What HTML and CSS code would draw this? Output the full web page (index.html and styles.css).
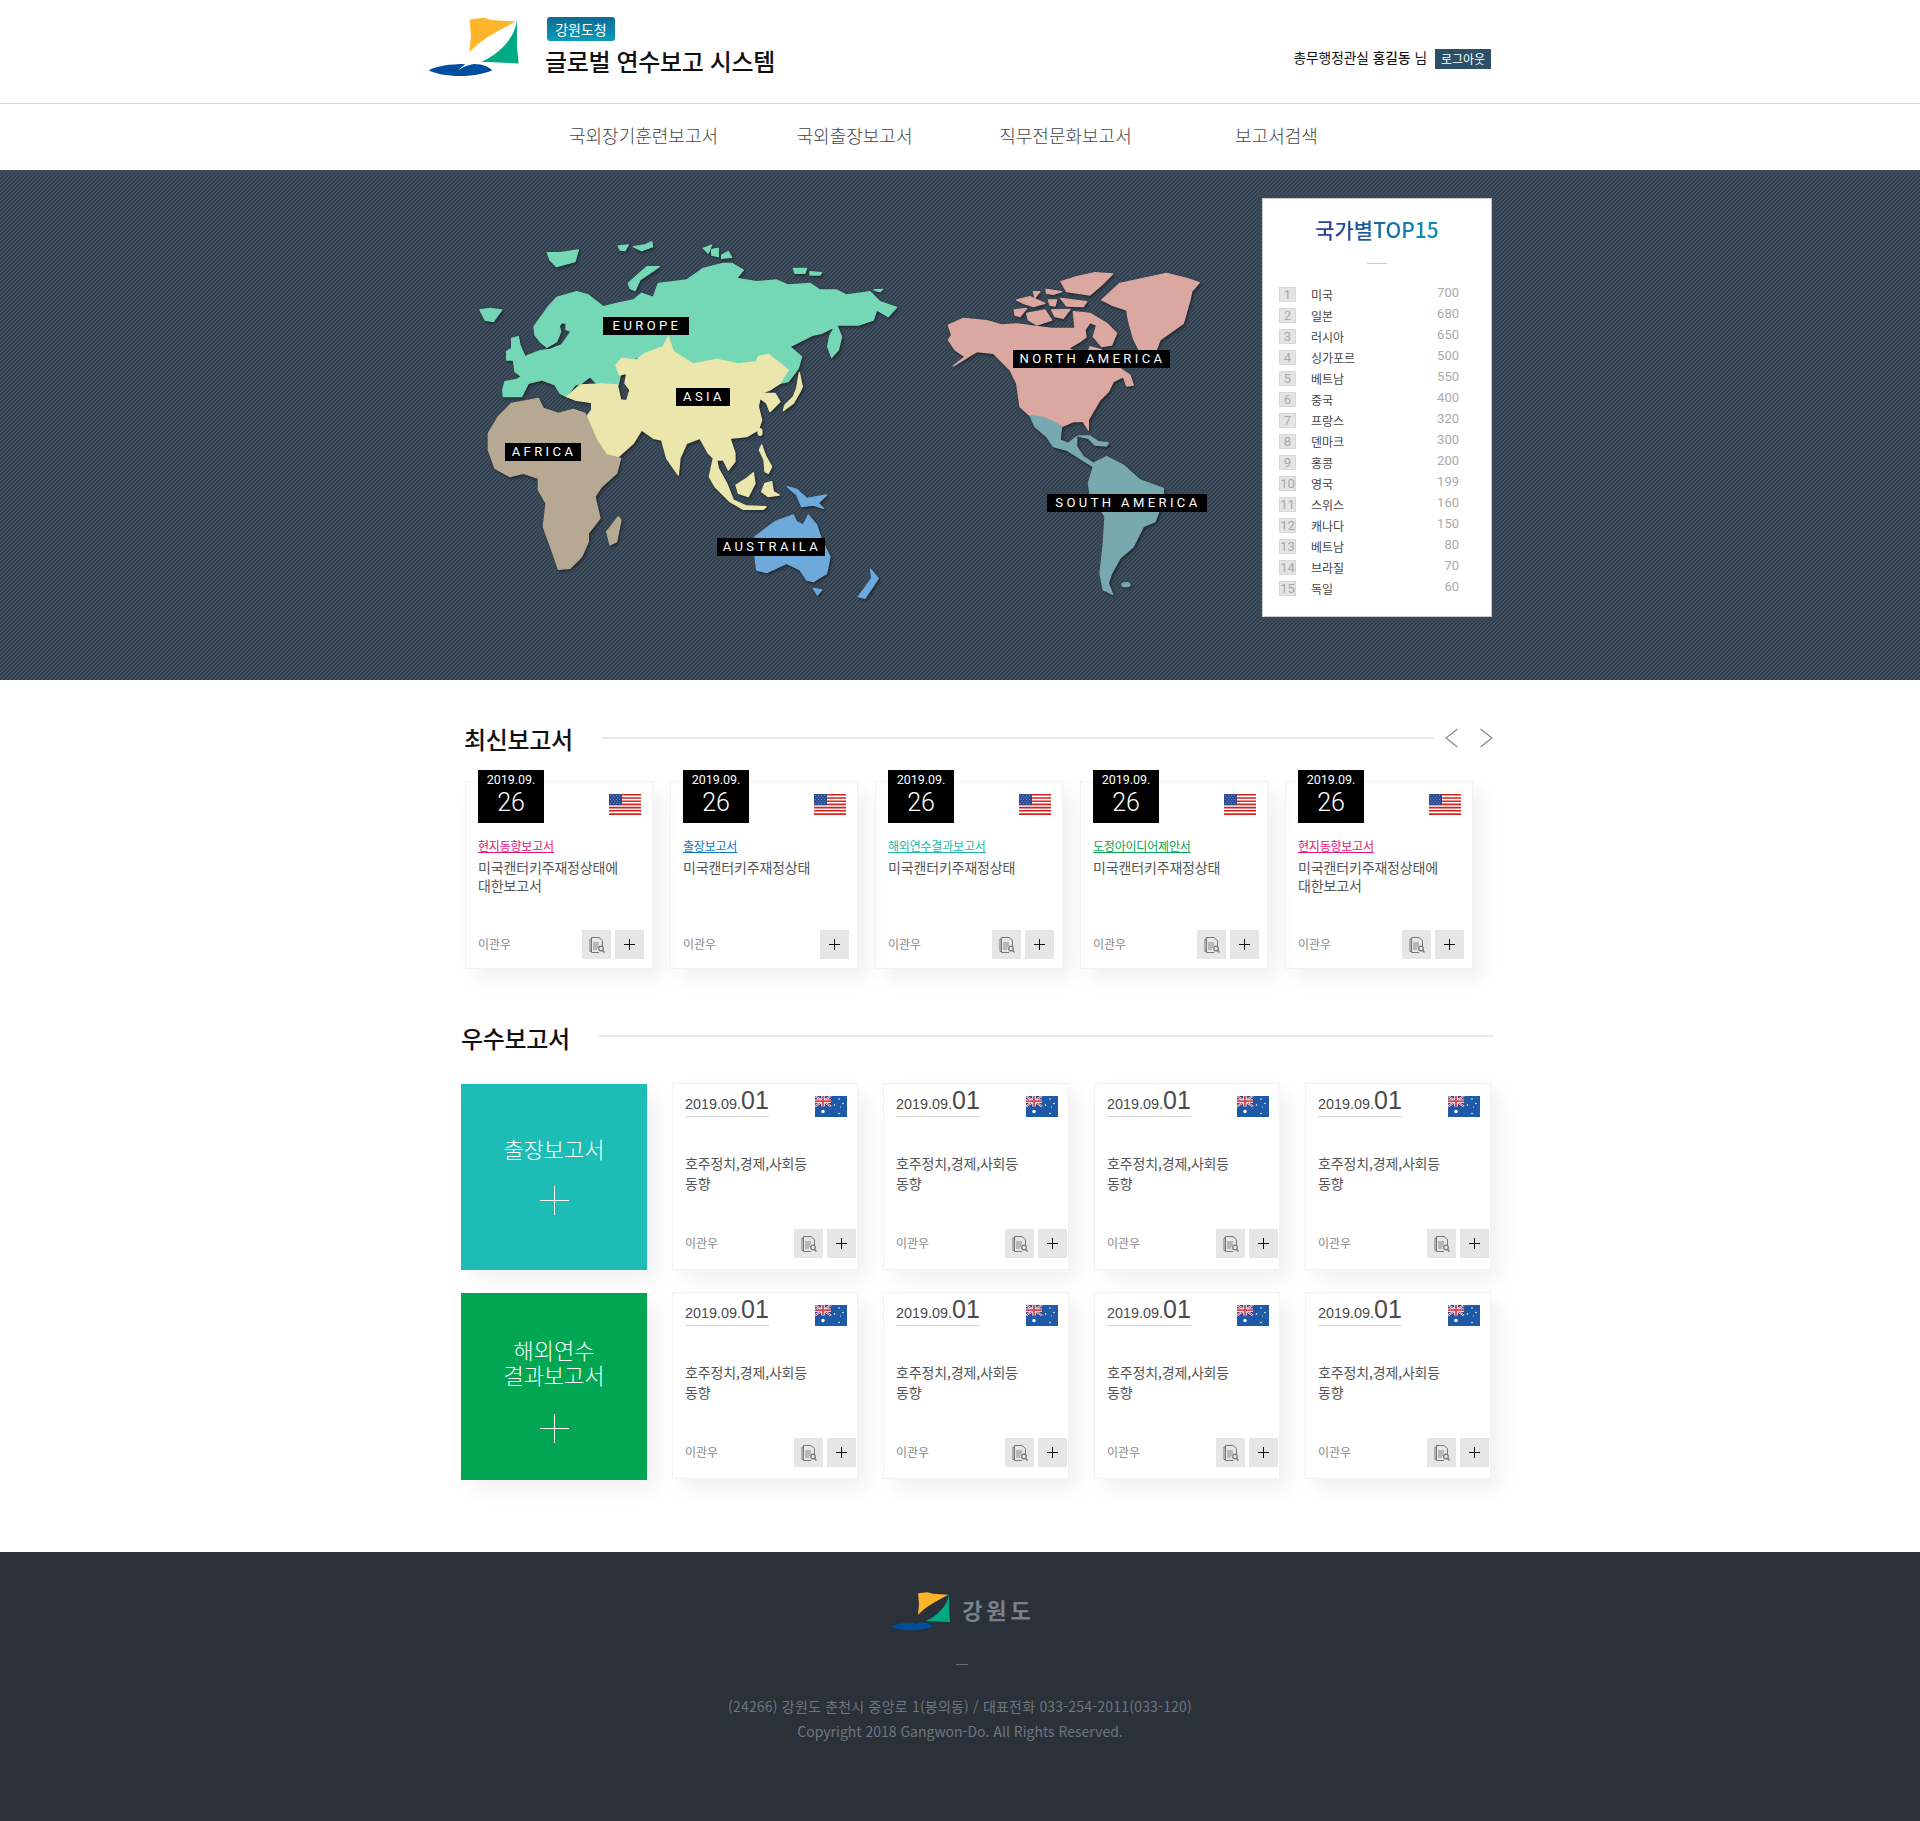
FILE: index.html
```html
<!DOCTYPE html>
<html lang="ko">
<head>
    <meta charset="UTF-8">
    <meta name="viewport" content="width=device-width, initial-scale=1.0">
    <title>글로벌 연수보고 시스템</title>
    <link rel="stylesheet" href="styles.css">
</head>
<body>

<!-- shared icons -->
<svg class="sprite" width="0" height="0">
    <defs>
        <symbol id="logo" viewBox="25 20 272 180">
            <path fill="#fdb62a" d="M148 30L190 25L215 32L285 36C240 60 180 90 147 128L152 80Z"/>
            <path fill="#00ab84" d="M288 28C285 80 240 130 183 155L293 160L288 110Z"/>
            <path fill="#004f9e" d="M27 180C50 168 90 162 135 162L113 182C125 172 140 166 160 162C190 162 205 172 215 180C190 192 150 197 120 197C80 197 45 190 27 180Z"/>
        </symbol>
        <symbol id="flag-us" viewBox="0 0 32 21">
            <rect width="32" height="21" fill="#fff"/>
            <path fill="#d8231f" d="M0 0h32v1.6H0zM0 3.2h32v1.6H0zM0 6.4h32V8H0zM0 9.6h32v1.6H0zM0 12.8h32v1.6H0zM0 16h32v1.6H0zM0 19.2h32V21H0z"/>
            <rect width="13" height="11.2" fill="#2f4d92"/>
            <path fill="#6f86ba" d="M1 1h1v1H1zM4 1h1v1H4zM7 1h1v1H7zM10 1h1v1h-1zM2.500 3h1v1h-1zM5.500 3h1v1h-1zM8.500 3h1v1h-1zM1 5h1v1H1zM4 5h1v1H4zM7 5h1v1H7zM10 5h1v1h-1zM2.500 7h1v1h-1zM5.500 7h1v1h-1zM8.500 7h1v1h-1zM1 9h1v1H1zM4 9h1v1H4zM7 9h1v1H7zM10 9h1v1h-1z"/>
        </symbol>
        <symbol id="flag-au" viewBox="0 0 32 21">
            <rect width="32" height="21" fill="#1f5aa6"/>
            <rect width="16" height="10.500" fill="#27479a"/>
            <path stroke="#fff" stroke-width="2" d="M0 0L16 10.500M16 0L0 10.500"/>
            <path stroke="#d9434e" stroke-width="1" d="M0 0L16 10.500M16 0L0 10.500"/>
            <path stroke="#fff" stroke-width="3.400" d="M8 0V10.500M0 5.250H16"/>
            <path stroke="#d9434e" stroke-width="1.800" d="M8 0V10.500M0 5.250H16"/>
            <g fill="#fff">
                <circle cx="8" cy="15.500" r="1.700"/>
                <circle cx="24" cy="3" r=".8"/>
                <circle cx="19.500" cy="9" r=".8"/>
                <circle cx="28" cy="7.500" r=".8"/>
                <circle cx="24" cy="17.500" r=".8"/>
                <circle cx="25.500" cy="11" r=".5"/>
            </g>
        </symbol>
        <symbol id="ico-doc" viewBox="0 0 18 18">
            <path fill="none" stroke="#777" stroke-width="1" d="M3.500 3V1.500H11L14.500 4.500V10M3.500 3H2V15.500H3.500M3.500 2.500V16.500H11"/>
            <path stroke="#888" stroke-width="1" d="M5 7h6M5 9h6M5 11h5M5 13h4"/>
            <circle cx="13" cy="12.500" r="2.300" fill="none" stroke="#777" stroke-width="1.200"/>
            <path stroke="#777" stroke-width="1.400" d="M14.500 14.500L16.500 16.500"/>
        </symbol>
        <symbol id="ico-plus" viewBox="0 0 11 11">
            <path stroke="#111" stroke-width="1" d="M5.500 0V11M0 5.500H11"/>
        </symbol>
        <symbol id="ico-plus-big" viewBox="0 0 29 29">
            <path stroke="#fff" stroke-width="1" d="M14.500 0V29M0 14.500H29"/>
        </symbol>
    </defs>
</svg>

<header class="top">
    <div class="top-inner">
        <svg class="top-logo"><use href="#logo"/></svg>
        <div class="brand">
            <span class="brand-badge">강원도청</span>
            <h1 class="brand-title">글로벌 연수보고 시스템</h1>
        </div>
        <div class="user-box">
            <span class="user-name">총무행정관실 <b>홍길동</b> 님</span>
            <a class="logout">로그아웃</a>
        </div>
    </div>
</header>

<nav class="gnb">
    <a>국외장기훈련보고서</a>
    <a>국외출장보고서</a>
    <a>직무전문화보고서</a>
    <a>보고서검색</a>
</nav>

<section class="hero">
    <div class="hero-inner">
        <div class="map">
            <svg class="map-svg" viewBox="0 0 780 400">
                <g class="map-shapes" transform="translate(0 0) scale(.33333)">
                    <g class="land land-green">
                        <path d="M128 510L135 485L170 478L185 470L165 455L160 420L140 420L140 395L155 385L155 355L175 350L180 375L195 410L240 392L270 388L305 375L333 335L318 328L318 310L305 308L298 318L302 335L290 365L260 382L240 365L225 345L222 320L265 260L290 232L350 215L385 225L430 260L470 250L520 240L545 220L580 232L595 190L640 185L680 180L730 145L790 130L815 130L850 150L830 175L890 185L950 180L985 195L1050 190L1080 210L1130 210L1160 225L1230 215L1260 245L1310 262L1285 290L1250 270L1240 300L1195 315L1150 315L1130 315L1145 350L1135 390L1115 412L1103 380L1110 345L1125 320L1085 340L1060 345L990 380L1025 410L1015 445L985 485L960 490L940 460L900 430L835 440L770 425L700 440L650 420L625 370L555 410L490 420L475 495L430 490L420 500L390 470L365 490L345 495L320 530L300 520L285 495L245 480L205 490L185 530L130 530Z"/>
                        <path d="M262 98L300 98L355 90L345 125L290 140L270 120Z"/>
                        <path d="M60 270L90 265L125 270L100 305L75 300Z"/>
                        <path d="M505 190L560 140L598 140L540 180L525 212L510 205Z"/>
                        <path d="M475 78L505 75L495 92L480 90Z"/>
                        <path d="M520 80L555 75L575 65L578 80L545 92Z"/>
                        <path d="M730 85L755 75L745 100Z"/>
                        <path d="M755 88L775 85L775 110L755 105Z"/>
                        <path d="M785 105L805 95L815 112L785 115Z"/>
                        <path d="M1000 145L1040 145L1035 160L1005 160Z"/>
                        <path d="M1050 155L1085 158L1080 165L1050 165Z"/>
                        <path d="M1242 210L1268 208L1260 215Z"/>
                    </g>
                    <g class="land land-yellow">
                        <path d="M320 530L360 495L425 492L472 495L482 540L500 542L510 510L495 490L500 460L478 465L468 435L485 415L530 420L555 400L610 380L625 350L640 395L700 432L770 418L835 432L890 425L895 410L925 403L960 430L985 450L960 490L930 510L895 525L920 520L945 520L960 545L930 575L920 550L900 535L895 560L905 600L895 630L860 650L810 655L825 700L825 725L805 750L790 720L770 720L775 745L800 790L820 840L860 858L918 860L910 868L850 868L810 845L765 800L748 770L760 715L745 700L720 655L680 670L660 715L655 765L620 715L605 660L580 655L545 630L520 670L475 710L440 705L410 660L380 590L395 570L395 548L345 540Z"/>
                        <path d="M1018 458L1027 500L1020 515L1000 550L970 572L975 555L1000 530L1010 505Z"/>
                        <ellipse cx="900" cy="636" rx="6" ry="10"/>
                        <path d="M905 675L918 710L935 740L925 760L915 755L912 720L898 690Z"/>
                        <path d="M880 758L885 790L865 830L835 820L828 795L860 775Z"/>
                        <path d="M915 790L935 785L940 815L958 825L925 830L905 815Z"/>
                    </g>
                    <g class="land land-tan">
                        <path d="M85 640L115 590L155 550L235 535L250 565L295 580L340 568L375 580L410 660L440 705L482 715L470 760L425 800L405 830L420 895L385 940L385 965L365 1010L330 1045L295 1048L275 990L250 920L258 850L235 810L235 775L190 760L150 770L105 745L85 690Z"/>
                        <path d="M475 890L483 900L470 965L450 975L440 935Z"/>
                    </g>
                    <g class="land land-blue">
                        <path d="M885 950L945 905L1000 885L1010 905L1030 915L1045 885L1070 915L1085 960L1110 1010L1100 1060L1060 1085L1040 1080L1020 1050L980 1030L920 1058L890 1050L885 1010Z"/>
                        <path d="M1232 1048L1255 1075L1215 1135L1195 1130L1235 1075Z"/>
                        <path d="M1060 1105L1085 1110L1072 1125Z"/>
                        <path d="M982 800L1010 808L1040 835L1100 825L1075 850L1090 865L1060 855L1025 860L1010 825Z"/>
                    </g>
                </g>
                <g class="map-shapes" transform="translate(460 30) scale(.33333)">
                    <g class="land land-pink">
                        <path d="M85 225L130 205L200 212L245 225L290 222L395 235L465 235L460 185L510 190L560 220L590 250L575 285L545 290L520 260L530 225L510 218L495 240L498 262L480 275L445 295L500 320L510 290L545 300L555 325L630 375L640 405L620 408L610 380L580 395L565 425L540 450L505 510L505 540L490 515L460 515L425 530L400 515L370 502L330 497L300 470L290 400L270 360L220 310L170 305L100 348L135 320L105 300L85 270L95 255Z"/>
                        <path d="M545 150L600 100L670 85L740 70L800 85L838 98L815 125L810 150L790 220L720 270L705 310L660 305L640 265L625 210L620 180L575 165Z"/>
                        <path d="M423 95L470 80L525 68L578 72L545 105L510 135L440 125Z"/>
                        <path d="M340 125L360 125L345 143Z"/>
                        <path d="M378 118L425 125L400 133L380 130Z"/>
                        <path d="M290 150L330 140L375 160L340 170L310 160Z"/>
                        <path d="M385 150L410 150L405 168L390 165Z"/>
                        <path d="M422 145L500 155L490 170L440 168Z"/>
                        <path d="M283 180L320 175L300 200L285 195Z"/>
                        <path d="M320 190L375 180L395 210L350 225L325 210Z"/>
                        <path d="M395 180L450 178L430 205L405 200Z"/>
                    </g>
                    <g class="land land-steel">
                        <path d="M330 497L370 502L400 515L425 530L420 570L445 580L470 560L470 590L490 620L520 640L560 620L610 645L660 690L730 715L730 750L705 815L670 830L640 890L600 925L575 970L565 1000L578 1033L550 1020L540 970L550 880L555 800L510 730L505 700L520 650L495 635L440 600L400 590L380 560L345 530Z"/>
                        <path d="M475 558L510 558L535 575L565 578L560 588L525 585L505 565Z"/>
                        <ellipse cx="618" cy="1004" rx="12" ry="6"/>
                    </g>
                </g>
            </svg>
            <span class="map-label lb-europe">EUROPE</span>
            <span class="map-label lb-asia">ASIA</span>
            <span class="map-label lb-africa">AFRICA</span>
            <span class="map-label lb-australia">AUSTRAILA</span>
            <span class="map-label lb-north">NORTH AMERICA</span>
            <span class="map-label lb-south">SOUTH AMERICA</span>
        </div>

        <aside class="rank">
            <h2 class="rank-title">국가별TOP15</h2>
            <ol class="rank-list">
                <li><span class="rank-no">1</span><span class="rank-name">미국</span><span class="rank-val">700</span></li>
                <li><span class="rank-no">2</span><span class="rank-name">일본</span><span class="rank-val">680</span></li>
                <li><span class="rank-no">3</span><span class="rank-name">러시아</span><span class="rank-val">650</span></li>
                <li><span class="rank-no">4</span><span class="rank-name">싱가포르</span><span class="rank-val">500</span></li>
                <li><span class="rank-no">5</span><span class="rank-name">베트남</span><span class="rank-val">550</span></li>
                <li><span class="rank-no">6</span><span class="rank-name">중국</span><span class="rank-val">400</span></li>
                <li><span class="rank-no">7</span><span class="rank-name">프랑스</span><span class="rank-val">320</span></li>
                <li><span class="rank-no">8</span><span class="rank-name">덴마크</span><span class="rank-val">300</span></li>
                <li><span class="rank-no">9</span><span class="rank-name">홍콩</span><span class="rank-val">200</span></li>
                <li><span class="rank-no">10</span><span class="rank-name">영국</span><span class="rank-val">199</span></li>
                <li><span class="rank-no">11</span><span class="rank-name">스위스</span><span class="rank-val">160</span></li>
                <li><span class="rank-no">12</span><span class="rank-name">캐나다</span><span class="rank-val">150</span></li>
                <li><span class="rank-no">13</span><span class="rank-name">베트남</span><span class="rank-val">80</span></li>
                <li><span class="rank-no">14</span><span class="rank-name">브라질</span><span class="rank-val">70</span></li>
                <li><span class="rank-no">15</span><span class="rank-name">독일</span><span class="rank-val">60</span></li>
            </ol>
        </aside>
    </div>
</section>

<main class="content">
    <section class="latest">
        <div class="sec-head">
            <h2 class="sec-title">최신보고서</h2>
            <span class="sec-line"></span>
            <svg class="arrows" width="48" height="20" viewBox="0 0 48 20">
                <path fill="none" stroke="#888" stroke-width="1.300" d="M12.500 1L1 10L12.500 19M35.500 1L47 10L35.500 19"/>
            </svg>
        </div>
        <div class="latest-row">
            <article class="card">
                <div class="card-top">
                    <div class="date-box"><span class="date-ym">2019.09.</span><span class="date-d">26</span></div>
                    <svg class="flag"><use href="#flag-us"/></svg>
                </div>
                <a class="cat cat-pink">현지동향보고서</a>
                <p class="card-text">미국캔터키주재정상태에<br>대한보고서</p>
                <div class="card-foot">
                    <span class="author">이관우</span>
                    <span class="btn"><svg class="ico-doc"><use href="#ico-doc"/></svg></span>
                    <span class="btn"><svg class="ico-plus"><use href="#ico-plus"/></svg></span>
                </div>
            </article>
            <article class="card">
                <div class="card-top">
                    <div class="date-box"><span class="date-ym">2019.09.</span><span class="date-d">26</span></div>
                    <svg class="flag"><use href="#flag-us"/></svg>
                </div>
                <a class="cat cat-blue">출장보고서</a>
                <p class="card-text">미국캔터키주재정상태</p>
                <div class="card-foot">
                    <span class="author">이관우</span>
                    <span class="btn"><svg class="ico-plus"><use href="#ico-plus"/></svg></span>
                </div>
            </article>
            <article class="card">
                <div class="card-top">
                    <div class="date-box"><span class="date-ym">2019.09.</span><span class="date-d">26</span></div>
                    <svg class="flag"><use href="#flag-us"/></svg>
                </div>
                <a class="cat cat-teal">해외연수결과보고서</a>
                <p class="card-text">미국캔터키주재정상태</p>
                <div class="card-foot">
                    <span class="author">이관우</span>
                    <span class="btn"><svg class="ico-doc"><use href="#ico-doc"/></svg></span>
                    <span class="btn"><svg class="ico-plus"><use href="#ico-plus"/></svg></span>
                </div>
            </article>
            <article class="card">
                <div class="card-top">
                    <div class="date-box"><span class="date-ym">2019.09.</span><span class="date-d">26</span></div>
                    <svg class="flag"><use href="#flag-us"/></svg>
                </div>
                <a class="cat cat-green">도정아이디어제안서</a>
                <p class="card-text">미국캔터키주재정상태</p>
                <div class="card-foot">
                    <span class="author">이관우</span>
                    <span class="btn"><svg class="ico-doc"><use href="#ico-doc"/></svg></span>
                    <span class="btn"><svg class="ico-plus"><use href="#ico-plus"/></svg></span>
                </div>
            </article>
            <article class="card">
                <div class="card-top">
                    <div class="date-box"><span class="date-ym">2019.09.</span><span class="date-d">26</span></div>
                    <svg class="flag"><use href="#flag-us"/></svg>
                </div>
                <a class="cat cat-pink">현지동향보고서</a>
                <p class="card-text">미국캔터키주재정상태에<br>대한보고서</p>
                <div class="card-foot">
                    <span class="author">이관우</span>
                    <span class="btn"><svg class="ico-doc"><use href="#ico-doc"/></svg></span>
                    <span class="btn"><svg class="ico-plus"><use href="#ico-plus"/></svg></span>
                </div>
            </article>
        </div>
    </section>

    <section class="best">
        <div class="sec-head sec-head-best">
            <h2 class="sec-title">우수보고서</h2>
            <span class="sec-line"></span>
        </div>
        <div class="best-grid">
            <a class="tile tile-teal">
                <span class="tile-text">출장보고서</span>
                <svg class="ico-plus-big"><use href="#ico-plus-big"/></svg>
            </a>
            <article class="mini">
                <div class="mini-top"><span class="mini-date">2019.09.<b>01</b></span><svg class="flag"><use href="#flag-au"/></svg></div>
                <p class="mini-text">호주정치,경제,사회등<br>동향</p>
                <div class="mini-foot"><span class="author">이관우</span><span class="btn"><svg class="ico-doc"><use href="#ico-doc"/></svg></span><span class="btn"><svg class="ico-plus"><use href="#ico-plus"/></svg></span></div>
            </article>
            <article class="mini">
                <div class="mini-top"><span class="mini-date">2019.09.<b>01</b></span><svg class="flag"><use href="#flag-au"/></svg></div>
                <p class="mini-text">호주정치,경제,사회등<br>동향</p>
                <div class="mini-foot"><span class="author">이관우</span><span class="btn"><svg class="ico-doc"><use href="#ico-doc"/></svg></span><span class="btn"><svg class="ico-plus"><use href="#ico-plus"/></svg></span></div>
            </article>
            <article class="mini">
                <div class="mini-top"><span class="mini-date">2019.09.<b>01</b></span><svg class="flag"><use href="#flag-au"/></svg></div>
                <p class="mini-text">호주정치,경제,사회등<br>동향</p>
                <div class="mini-foot"><span class="author">이관우</span><span class="btn"><svg class="ico-doc"><use href="#ico-doc"/></svg></span><span class="btn"><svg class="ico-plus"><use href="#ico-plus"/></svg></span></div>
            </article>
            <article class="mini">
                <div class="mini-top"><span class="mini-date">2019.09.<b>01</b></span><svg class="flag"><use href="#flag-au"/></svg></div>
                <p class="mini-text">호주정치,경제,사회등<br>동향</p>
                <div class="mini-foot"><span class="author">이관우</span><span class="btn"><svg class="ico-doc"><use href="#ico-doc"/></svg></span><span class="btn"><svg class="ico-plus"><use href="#ico-plus"/></svg></span></div>
            </article>

            <a class="tile tile-green">
                <span class="tile-text">해외연수<br>결과보고서</span>
                <svg class="ico-plus-big"><use href="#ico-plus-big"/></svg>
            </a>
            <article class="mini">
                <div class="mini-top"><span class="mini-date">2019.09.<b>01</b></span><svg class="flag"><use href="#flag-au"/></svg></div>
                <p class="mini-text">호주정치,경제,사회등<br>동향</p>
                <div class="mini-foot"><span class="author">이관우</span><span class="btn"><svg class="ico-doc"><use href="#ico-doc"/></svg></span><span class="btn"><svg class="ico-plus"><use href="#ico-plus"/></svg></span></div>
            </article>
            <article class="mini">
                <div class="mini-top"><span class="mini-date">2019.09.<b>01</b></span><svg class="flag"><use href="#flag-au"/></svg></div>
                <p class="mini-text">호주정치,경제,사회등<br>동향</p>
                <div class="mini-foot"><span class="author">이관우</span><span class="btn"><svg class="ico-doc"><use href="#ico-doc"/></svg></span><span class="btn"><svg class="ico-plus"><use href="#ico-plus"/></svg></span></div>
            </article>
            <article class="mini">
                <div class="mini-top"><span class="mini-date">2019.09.<b>01</b></span><svg class="flag"><use href="#flag-au"/></svg></div>
                <p class="mini-text">호주정치,경제,사회등<br>동향</p>
                <div class="mini-foot"><span class="author">이관우</span><span class="btn"><svg class="ico-doc"><use href="#ico-doc"/></svg></span><span class="btn"><svg class="ico-plus"><use href="#ico-plus"/></svg></span></div>
            </article>
            <article class="mini">
                <div class="mini-top"><span class="mini-date">2019.09.<b>01</b></span><svg class="flag"><use href="#flag-au"/></svg></div>
                <p class="mini-text">호주정치,경제,사회등<br>동향</p>
                <div class="mini-foot"><span class="author">이관우</span><span class="btn"><svg class="ico-doc"><use href="#ico-doc"/></svg></span><span class="btn"><svg class="ico-plus"><use href="#ico-plus"/></svg></span></div>
            </article>
        </div>
    </section>
</main>

<footer class="foot">
    <div class="foot-logo">
        <svg class="foot-mark"><use href="#logo"/></svg>
        <span class="foot-name">강원도</span>
    </div>
    <span class="foot-dash"></span>
    <p class="foot-addr">(24266) 강원도 춘천시 중앙로 1(봉의동) / 대표전화 033-254-2011(033-120)</p>
    <p class="foot-copy">Copyright 2018 Gangwon-Do. All Rights Reserved.</p>
</footer>

</body>
</html>
```

FILE: styles.css
```css
* {
    box-sizing: border-box;
}
body {
    margin: 0;
    background: #fff;
    color: #222;
    font-family: "Noto Sans CJK KR", "Noto Sans", sans-serif;
}
h1, h2, p, ol {
    margin: 0;
    padding: 0;
}
.sprite {
    display: block;
}

/* header */
.top {
    height: 104px;
    border-bottom: 1px solid #d9d9d9;
}
.top-inner {
    width: 1064px;
    height: 103px;
    margin: 0 auto;
    display: flex;
}
.top-logo {
    width: 92px;
    height: 61px;
    margin-top: 16px;
}
.brand {
    margin-left: 25px;
    padding-top: 17px;
}
.brand-badge {
    display: block;
    width: 68px;
    height: 24px;
    margin-left: 2px;
    border-radius: 3px;
    background: linear-gradient(#0c6b92, #0a9cbc);
    color: #fff;
    font-size: 14px;
    line-height: 24px;
    text-align: center;
}
.brand-title {
    margin-top: 3px;
    color: #111;
    font-size: 24px;
    font-weight: 500;
    line-height: 34px;
    letter-spacing: -.35px;
}
.user-box {
    margin-left: auto;
    margin-right: 1px;
    padding-top: 45px;
    display: flex;
    height: 71px;
    align-items: center;
    gap: 8px;
}
.user-name {
    margin-bottom: 2px;
    color: #111;
    font-size: 13.7px;
}
.user-name b {
    font-weight: 500;
}
.logout {
    width: 56px;
    height: 20px;
    margin-top: 2px;
    background: #2b5068;
    color: #fff;
    font-size: 12px;
    line-height: 20px;
    text-align: center;
}

/* nav */
.gnb {
    width: 844px;
    height: 66px;
    margin: 0 auto;
    padding-bottom: 4px;
    display: grid;
    grid-template-columns: repeat(4, 1fr);
    align-items: center;
    text-align: center;
}
.gnb a {
    color: #444;
    font-size: 18px;
    font-weight: 300;
}

/* hero */
.hero {
    height: 510px;
    background-color: #404f5f;
    background-image: linear-gradient(135deg, #33414f 25%, transparent 25%, transparent 50%, #33414f 50%, #33414f 75%, transparent 75%);
    background-size: 4px 4px;
}
.hero-inner {
    width: 1031px;
    height: 510px;
    margin-left: 461px;
    position: relative;
    display: flex;
    justify-content: flex-end;
}
.map {
    position: absolute;
    left: -1px;
    top: 50px;
    width: 780px;
    height: 400px;
}
.map-svg {
    display: block;
    width: 780px;
    height: 400px;
}
.map-shapes {
    filter: drop-shadow(4px 5px 4px rgba(0, 0, 0, .45));
}
.land {
    stroke-width: 4;
    stroke-linejoin: round;
}
.land-green { fill: #74d7b6; stroke: #74d7b6; }
.land-yellow { fill: #ebe6ac; stroke: #ebe6ac; }
.land-tan { fill: #b6a892; stroke: #b6a892; }
.land-blue { fill: #6ea9dc; stroke: #6ea9dc; }
.land-pink { fill: #daa8a0; stroke: #daa8a0; }
.land-steel { fill: #78a8b0; stroke: #78a8b0; }
.map-label {
    position: absolute;
    height: 18px;
    padding-left: 2px;
    background: #000;
    color: #fff;
    font-family: "Roboto", sans-serif;
    font-size: 13px;
    line-height: 17px;
    letter-spacing: 3.4px;
    text-align: center;
}
.lb-europe { left: 143px; top: 97px; width: 86px; }
.lb-asia { left: 216px; top: 168px; width: 54px; }
.lb-africa { left: 45px; top: 223px; width: 76px; }
.lb-australia { left: 257px; top: 318px; width: 108px; }
.lb-north { left: 553px; top: 130px; width: 157px; }
.lb-south { left: 587px; top: 274px; width: 160px; }

/* rank panel */
.rank {
    width: 230px;
    height: 419px;
    margin-top: 28px;
    padding: 16px 32px 0 16px;
    border: 1px solid #ccc;
    background: #fff;
}
.rank-title {
    width: 228px;
    margin-left: -16px;
    background: linear-gradient(90deg, #2b3f8f 30%, #0a8cb8 70%);
    -webkit-background-clip: text;
    background-clip: text;
    color: transparent;
    font-size: 21px;
    font-weight: 500;
    line-height: 28px;
    text-align: center;
}
.rank-title::after {
    content: "";
    display: block;
    width: 20px;
    height: 1px;
    margin: 20px auto 0;
    background: #ccc;
}
.rank-list {
    margin-top: 23px;
    list-style: none;
}
.rank-list li {
    height: 21px;
    display: flex;
}
.rank-no {
    width: 17px;
    height: 15px;
    background: #e4e4e4;
    border: 1px solid #d8d8d8;
    color: #a8a8a8;
    font-family: "Roboto", sans-serif;
    font-size: 13px;
    line-height: 13px;
    text-align: center;
}
.rank-name {
    margin-left: 15px;
    color: #444;
    font-size: 12px;
    line-height: 16px;
}
.rank-val {
    height: 13px;
    margin-left: auto;
    margin-top: -1px;
    color: #aaa;
    font-family: "Roboto", sans-serif;
    font-size: 13px;
    line-height: 13px;
}

/* sections */
.content {
    width: 1032px;
    margin-left: 461px;
    padding-top: 42px;
}
.sec-head {
    height: 34px;
    padding-left: 3px;
    display: flex;
    align-items: center;
}
.sec-title {
    color: #111;
    font-size: 24px;
    font-weight: 500;
    line-height: 34px;
    letter-spacing: -.3px;
}
.sec-line {
    flex: 1;
    height: 2px;
    margin: -2px 0 0 29px;
    background: #e8e8e8;
}
.arrows {
    margin: -2px 0 0 11px;
}
.latest-row {
    margin: 14px 0 0 4px;
    display: flex;
    gap: 17px;
}
.card {
    width: 188px;
    height: 188px;
    flex: none;
    margin-top: 11px;
    padding: 0 11px 0 12px;
    border: 1px solid #f2f2f2;
    box-shadow: 10px 10px 20px rgba(0, 0, 0, .06);
    display: flex;
    flex-direction: column;
}
.card-top {
    display: flex;
    justify-content: space-between;
    align-items: center;
    margin-top: -12px;
    height: 53px;
}
.date-box {
    width: 66px;
    height: 53px;
    background: #000;
    color: #fff;
    text-align: center;
    display: flex;
    flex-direction: column;
    font-family: "Roboto", sans-serif;
}
.date-ym {
    font-size: 12.500px;
    line-height: 20px;
}
.date-d {
    font-size: 25px;
    line-height: 26px;
    font-weight: 300;
}
.flag {
    width: 32px;
    height: 21px;
    flex: none;
}
.card-top .flag {
    margin-top: 16px;
}
.cat {
    margin-top: 16px;
    font-size: 12px;
    line-height: 14px;
    text-decoration: underline;
    letter-spacing: -.2px;
}
.cat-pink { color: #e6107a; }
.cat-blue { color: #0a78c2; }
.cat-teal { color: #16b8ae; }
.cat-green { color: #00a651; }
.card-text {
    margin-top: 5px;
    color: #555;
    font-size: 14px;
    line-height: 18px;
    letter-spacing: -.15px;
}
.card-foot {
    margin: auto -3px 9px 0;
    display: flex;
    align-items: center;
    gap: 4px;
}
.author {
    margin-right: auto;
    color: #888;
    font-size: 12px;
    line-height: 28px;
    height: 29px;
}
.btn {
    width: 29px;
    height: 29px;
    background: #e6e6e6;
    display: flex;
    align-items: center;
    justify-content: center;
}
.ico-doc {
    width: 18px;
    height: 18px;
}
.ico-plus {
    width: 11px;
    height: 11px;
}

/* best reports */
.best {
    margin-top: 52px;
}
.sec-head-best {
    padding-left: 0;
}
.sec-head-best .sec-line {
    margin-top: -4px;
}
.best-grid {
    margin-top: 28px;
    display: grid;
    grid-template-columns: repeat(5, 186px);
    grid-auto-rows: 187px;
    column-gap: 25px;
    row-gap: 22px;
}
.tile {
    margin-top: 1px;
    color: #fff;
    box-shadow: 10px 10px 20px rgba(0, 0, 0, .06);
    display: flex;
    flex-direction: column;
    align-items: center;
    justify-content: center;
    font-size: 22px;
    font-weight: 300;
    line-height: 25px;
    text-align: center;
}
.tile-teal {
    padding-bottom: 3px;
    background: #1dbcb4;
}
.tile-green {
    margin-bottom: -1px;
    padding-top: 7px;
    background: #00a651;
}
.ico-plus-big {
    width: 29px;
    height: 29px;
    margin-top: 25px;
}
.tile-green .ico-plus-big {
    margin-top: 27px;
}
.mini {
    width: 186px;
    height: 187px;
    padding: 0 1px 0 12px;
    border: 1px solid #f2f2f2;
    box-shadow: 10px 10px 20px rgba(0, 0, 0, .06);
    display: flex;
    flex-direction: column;
}
.mini-top {
    display: flex;
    justify-content: space-between;
    align-items: flex-end;
    height: 33px;
    padding-right: 9px;
}
.mini-date {
    height: 32px;
    border-bottom: 1px solid #d5d5d5;
    color: #4a4a4a;
    font-family: "Liberation Sans", sans-serif;
    font-size: 14.400px;
    line-height: 31px;
}
.mini-date b {
    font-size: 25px;
    font-weight: 400;
}
.mini-text {
    margin-top: 36px;
    color: #555;
    font-size: 14px;
    line-height: 20px;
    letter-spacing: -.15px;
}
.mini-foot {
    margin: auto 0 11px 0;
    display: flex;
    align-items: center;
    gap: 4px;
}

/* footer */
.foot {
    height: 269px;
    margin-top: 73px;
    padding-top: 39px;
    background: #2a3139;
    text-align: center;
}
.foot-logo {
    height: 40px;
    display: flex;
    justify-content: center;
    align-items: flex-end;
    padding-left: 6px;
}
.foot-mark {
    width: 60px;
    height: 40px;
}
.foot-name {
    margin: 0 0 7px 11px;
    color: #7b8188;
    font-size: 22px;
    font-weight: 700;
    line-height: 30px;
    letter-spacing: 4px;
}
.foot-dash {
    display: block;
    width: 12px;
    height: 1px;
    margin: 33px 0 0 956px;
    background: #666c73;
}
.foot-addr {
    margin-top: 31px;
    color: #6f767e;
    font-size: 14px;
    line-height: 20px;
    letter-spacing: .2px;
}
.foot-copy {
    margin-top: 5px;
    color: #6f767e;
    font-size: 14px;
    line-height: 20px;
}
```
